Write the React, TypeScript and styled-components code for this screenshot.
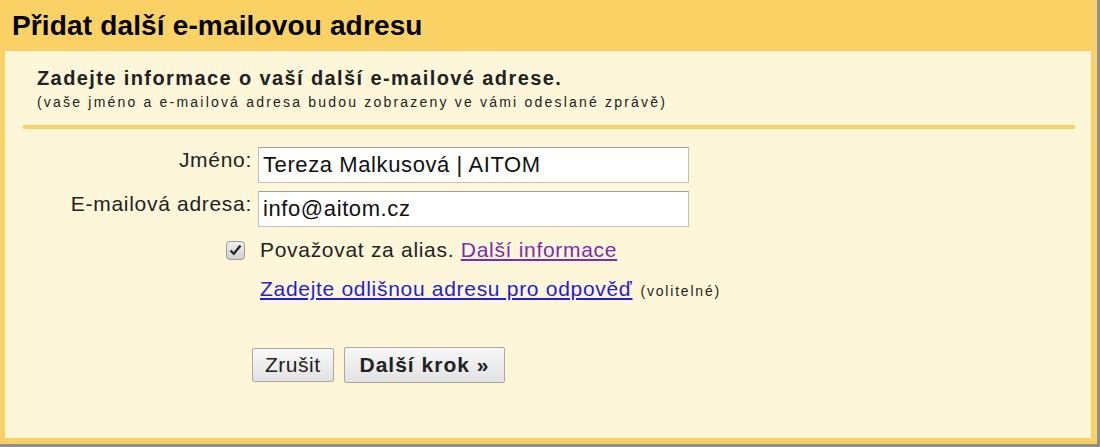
import styled, { createGlobalStyle } from 'styled-components';

const Global = createGlobalStyle`
  html, body {
    margin: 0;
    padding: 0;
    background: #8e8e8e;
  }
  body {
    font-family: Arial, 'Liberation Sans', sans-serif;
  }
`;

const Frame = styled.div`
  box-sizing: border-box;
  width: 1097px;
  height: 444px;
  background: #fad165;
  display: flex;
  flex-direction: column;
  padding: 0 6px 6px 5px;
`;

const Title = styled.h1`
  box-sizing: border-box;
  margin: 0;
  padding: 10px 0 0 7px;
  height: 51px;
  font-size: 28px;
  font-weight: bold;
  color: #000;
  line-height: 32px;
  letter-spacing: 0.15px;
`;

const Panel = styled.div`
  flex: 1;
  background: #fef6d9;
  padding: 15px 16px 0 18px;
`;

const Heading = styled.div`
  padding-left: 14px;
  font-size: 20px;
  font-weight: bold;
  color: #222;
  line-height: 24px;
  letter-spacing: 1.4px;
`;

const Note = styled.div`
  padding-left: 14px;
  margin-top: 4px;
  font-size: 14px;
  color: #222;
  letter-spacing: 2.2px;
  line-height: 16px;
  white-space: nowrap;
`;

const Divider = styled.hr`
  margin: 15px 0 0 0;
  border: 0;
  height: 4px;
  background: #fad165;
`;

const Form = styled.div`
  display: grid;
  grid-template-columns: 229px 431px;
  column-gap: 6px;
  row-gap: 8px;
  margin-top: 18px;
  align-items: center;
`;

const Label = styled.label`
  text-align: right;
  font-size: 21px;
  line-height: 26px;
  letter-spacing: 0.7px;
  color: #222;
  align-self: start;
  white-space: nowrap;
`;

const Input = styled.div`
  box-sizing: border-box;
  height: 36px;
  background: #fff;
  border: 1px solid #c0c0c0;
  border-top-color: #a0a0a0;
  padding: 4px 4px;
  font-size: 22px;
  letter-spacing: 0.6px;
  color: #111;
  line-height: 26px;
  white-space: nowrap;
`;

const Options = styled.div`
  grid-column: 2;
  display: flex;
  flex-direction: column;
  gap: 15px;
  margin-left: -32px;
  margin-top: 3px;
`;

const OptionRow = styled.div<{ $indent?: boolean }>`
  display: flex;
  align-items: center;
  gap: 15px;
  padding-left: ${({ $indent }) => ($indent ? '34px' : '0')};
  font-size: 21px;
  line-height: 24px;
  letter-spacing: 0.7px;
  color: #222;
  white-space: nowrap;
`;

const Check = styled.span`
  box-sizing: border-box;
  width: 19px;
  height: 19px;
  border: 1px solid #999;
  border-radius: 4px;
  background: linear-gradient(#f0f0f0, #d0d0d0);
  display: flex;
  align-items: center;
  justify-content: center;
`;

const Link = styled.a<{ $visited?: boolean }>`
  color: ${({ $visited }) => ($visited ? '#7b2eb0' : '#1f1fd8')};
  text-decoration: underline;
  cursor: pointer;
`;

const Small = styled.span`
  font-size: 14px;
  letter-spacing: 1.8px;
  color: #222;
  margin-left: 8px;
`;

const Buttons = styled.div`
  grid-column: 2;
  display: flex;
  align-items: center;
  gap: 10px;
  margin-left: -6px;
  margin-top: 36px;
`;

const Button = styled.button<{ $primary?: boolean }>`
  box-sizing: border-box;
  height: ${({ $primary }) => ($primary ? '36px' : '34px')};
  padding: 0 ${({ $primary }) => ($primary ? '15px' : '12px')};
  font-family: Arial, 'Liberation Sans', sans-serif;
  font-size: 21px;
  letter-spacing: ${({ $primary }) => ($primary ? '1px' : '0.5px')};
  font-weight: ${({ $primary }) => ($primary ? 'bold' : 'normal')};
  color: #222;
  background: linear-gradient(#f8f8f8, #e2e2e2);
  border: 1px solid #a8a8a8;
  border-radius: 2px;
`;

export default function App() {
  return (
    <>
      <Global />
      <Frame>
        <Title>Přidat další e-mailovou adresu</Title>
        <Panel>
          <Heading>Zadejte informace o vaší další e-mailové adrese.</Heading>
          <Note>(vaše jméno a e-mailová adresa budou zobrazeny ve vámi odeslané zprávě)</Note>
          <Divider />
          <Form>
            <Label>Jméno:</Label>
            <Input>Tereza Malkusová | AITOM</Input>
            <Label>E-mailová adresa:</Label>
            <Input>info@aitom.cz</Input>
            <Options>
              <OptionRow>
                <Check>
                  <svg width="13" height="12" viewBox="0 0 13 12">
                    <path d="M1.5 6.5 L4.8 9.8 L11.5 1.5" fill="none" stroke="#2a2a2a" strokeWidth="2.4" />
                  </svg>
                </Check>
                <span>
                  Považovat za alias. <Link $visited>Další informace</Link>
                </span>
              </OptionRow>
              <OptionRow $indent>
                <span>
                  <Link>Zadejte odlišnou adresu pro odpověď</Link>
                  <Small>(volitelné)</Small>
                </span>
              </OptionRow>
            </Options>
            <Buttons>
              <Button>Zrušit</Button>
              <Button $primary>Další krok »</Button>
            </Buttons>
          </Form>
        </Panel>
      </Frame>
    </>
  );
}
